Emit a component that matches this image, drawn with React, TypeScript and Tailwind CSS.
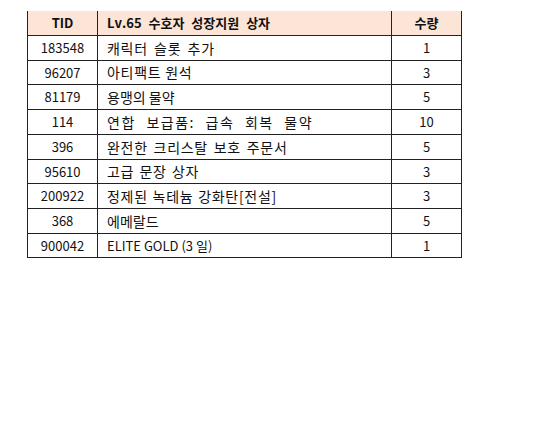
import React from "react";

const rows: { tid: string; name: string; qty: string; h: string; ws: string }[] = [
  { tid: "183548", name: "캐릭터 슬롯 추가", qty: "1", h: "h-[25px]", ws: "text-[14px] [word-spacing:2.5px] tracking-[0.7px]" },
  { tid: "96207", name: "아티팩트 원석", qty: "3", h: "h-[24px]", ws: "text-[14px] [word-spacing:0px] tracking-[0.7px]" },
  { tid: "81179", name: "용맹의 물약", qty: "5", h: "h-[25px]", ws: "text-[14px] [word-spacing:0px] tracking-[0px]" },
  { tid: "114", name: "연합 보급품: 급속 회복 물약", qty: "10", h: "h-[25px]", ws: "text-[14px] [word-spacing:6px] tracking-[1.5px]" },
  { tid: "396", name: "완전한 크리스탈 보호 주문서", qty: "5", h: "h-[25px]", ws: "text-[14px] [word-spacing:2px] tracking-[0.7px]" },
  { tid: "95610", name: "고급 문장 상자", qty: "3", h: "h-[24px]", ws: "text-[14px] [word-spacing:1.5px] tracking-[0.7px]" },
  { tid: "200922", name: "정제된 녹테늄 강화탄[전설]", qty: "3", h: "h-[25px]", ws: "text-[14px] [word-spacing:1px] tracking-[0.7px]" },
  { tid: "368", name: "에메랄드", qty: "5", h: "h-[25px]", ws: "text-[14px] [word-spacing:0px] tracking-[0px]" },
  { tid: "900042", name: "ELITE GOLD (3 일)", qty: "1", h: "h-[24px]", ws: "text-[13px] [word-spacing:0px] tracking-[0px]" },
];

export default function App() {
  return (
    <div
      className="w-[558px] h-[444px] bg-white pt-[11px] pl-[27px] text-[13px] text-[#111] [font-kerning:none]"
      style={{ fontFamily: '"Noto Sans CJK KR", "Noto Sans", sans-serif' }}
    >
      <div className="flex flex-col w-[435px]">
        <div className="flex h-[25px] bg-[#fce4d6] border-b border-[#222] font-bold">
          <div className="w-[70px] border-l border-[#222] flex items-center justify-center">TID</div>
          <div className="w-[294px] border-l border-[#222] flex items-center pl-[9px] [word-spacing:4px]">
            Lv.65 수호자 성장지원 상자
          </div>
          <div className="w-[71px] border-l border-r border-[#222] flex items-center justify-center">수량</div>
        </div>
        {rows.map((r) => (
          <div key={r.tid} className={`flex ${r.h} border-b border-[#222]`}>
            <div className="w-[70px] border-l border-[#222] flex items-center justify-center">{r.tid}</div>
            <div className={`w-[294px] border-l border-[#222] flex items-center pl-[9px] whitespace-nowrap ${r.ws}`}>
              {r.name}
            </div>
            <div className="w-[71px] border-l border-r border-[#222] flex items-center justify-center">{r.qty}</div>
          </div>
        ))}
      </div>
    </div>
  );
}
